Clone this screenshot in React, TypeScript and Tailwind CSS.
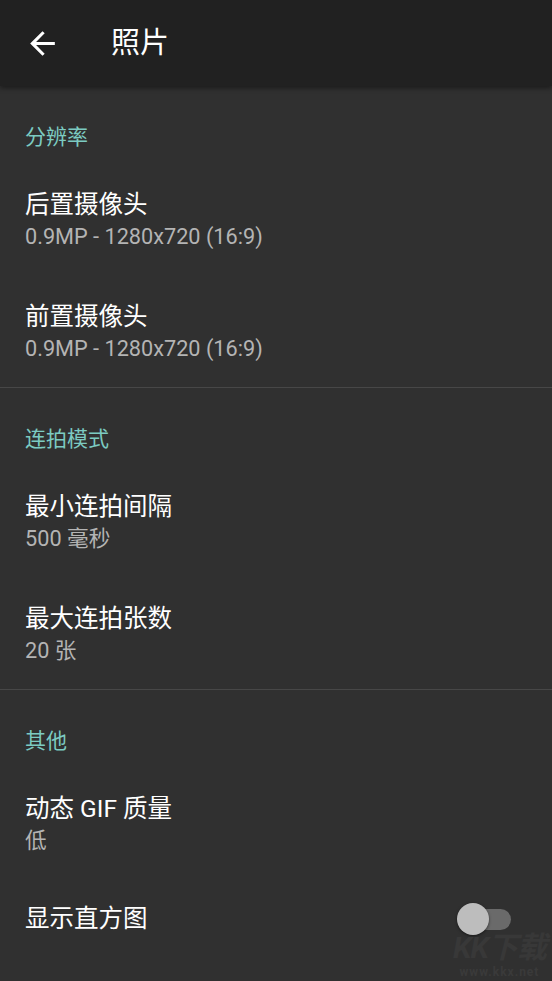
import React from "react";

type Pref = { title: string; summary?: string; toggle?: boolean };
type Section = { header: string; items: Pref[] };

const sections: Section[] = [
  {
    header: "分辨率",
    items: [
      { title: "后置摄像头", summary: "0.9MP - 1280x720 (16:9)" },
      { title: "前置摄像头", summary: "0.9MP - 1280x720 (16:9)" },
    ],
  },
  {
    header: "连拍模式",
    items: [
      { title: "最小连拍间隔", summary: "500 毫秒" },
      { title: "最大连拍张数", summary: "20 张" },
    ],
  },
  {
    header: "其他",
    items: [
      { title: "动态 GIF 质量", summary: "低" },
      { title: "显示直方图", toggle: true },
    ],
  },
];

const font = { fontFamily: '"Roboto", "Noto Sans CJK SC", sans-serif' };

function BackArrow() {
  return (
    <svg width="37" height="37" viewBox="0 0 24 24" className="fill-white">
      <path d="M20 11H7.83l5.59-5.59L12 4l-8 8 8 8 1.41-1.41L7.83 13H20v-2z" />
    </svg>
  );
}

function Switch() {
  return (
    <div className="relative w-[54px] h-[32px] mr-[41px]">
      <div className="absolute left-[2px] right-0 top-[6px] h-[21px] rounded-full bg-[#6a6a6a]" />
      <div className="absolute left-0 top-0 w-[32px] h-[32px] rounded-full bg-[#bdbdbd] shadow-[0_1px_3px_rgba(0,0,0,0.5)]" />
    </div>
  );
}

function PrefItem({ item }: { item: Pref }) {
  if (item.toggle) {
    return (
      <div className="h-[80px] flex items-center justify-between pl-[25px]">
        <span className="text-[24.5px] leading-[32px] text-white">{item.title}</span>
        <Switch />
      </div>
    );
  }
  return (
    <div className="h-[112px] flex flex-col pl-[25px] pt-[26px]">
      <span className="text-[24.5px] leading-[32px] text-white">{item.title}</span>
      <span className="text-[21.7px] leading-[32px] text-[#b4b4b4]">{item.summary}</span>
    </div>
  );
}

export default function App() {
  return (
    <div className="w-[552px] h-[981px] overflow-hidden bg-[#303030] relative" style={font}>
      <header className="h-[86px] bg-[#212121] flex items-center relative z-10 shadow-[0_2px_5px_rgba(0,0,0,0.45)]">
        <div className="w-[37px] h-[37px] ml-[24px]">
          <BackArrow />
        </div>
        <h1 className="ml-[50px] text-[29px] text-white leading-none">照片</h1>
      </header>

      {sections.map((s, i) => (
        <div key={s.header}>
          {i > 0 && <div className="h-px bg-[#474747]" />}
          <div className="h-[77px] pl-[25px] pt-[36px]">
            <span className="block text-[21px] leading-[30px] text-[#7ccbc2]">{s.header}</span>
          </div>
          {s.items.map((it) => (
            <PrefItem key={it.title} item={it} />
          ))}
        </div>
      ))}

      <div className="absolute right-[6px] bottom-[2px] flex flex-col items-center gap-[2px] pointer-events-none select-none">
        <span className="text-[30px] leading-[32px] font-bold italic text-[#383838] tracking-[-1px]">KK下载</span>
        <span className="text-[12px] leading-[13px] font-bold text-[#3a3a3a] tracking-[1px]">www.kkx.net</span>
      </div>
    </div>
  );
}
